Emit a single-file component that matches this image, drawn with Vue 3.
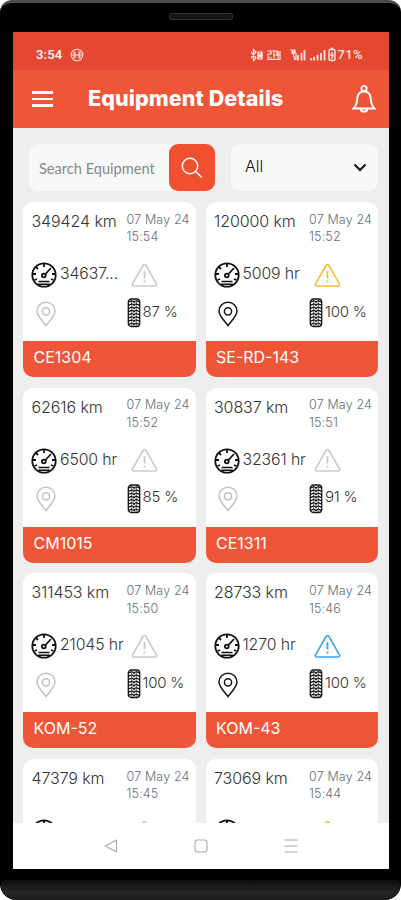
<template>
  <div class="phone">
    <div class="speaker"></div>
    <div class="screen">
      <div class="status-bar">
        <span class="time">3:54</span>
        <svg class="status-badge" width="14" height="14" viewBox="0 0 14 14">
          <circle cx="7" cy="7" r="5.8" />
          <path d="M5 3.5v7M9 3.5v7M2 7h10M3 5h2M9 5h2M3 9h2M9 9h2" />
        </svg>
        <svg class="status-icons" width="77" height="16" viewBox="0 0 77 16">
          <path d="M1 5l5 6-2.5 2.5v-11L6 5l-5 6M8 5l4 7M12 5l-4 7M7 8.5h6M8 5h4v7H8z" />
          <path d="M17 4h4v3h-3v4h4M24 4v8M22 4h5v4h-4M28 4v9M30 4v9M17 12.5h13M23 8h7" />
          <path d="M40 3h5v3h-4M42 3l3 10M46 6v7M44 3v4" />
          <path class="bars" d="M48 8v5.5M51.500 6v7.500M54.500 3v10.500" />
          <path class="bars" d="M61 11v2.500M64 10v3.500M67.500 8v5.500M71 6v7.500M74.500 3v10.500" />
        </svg>
        <svg class="battery" width="8" height="15" viewBox="0 0 8 15">
          <path d="M2.500 1.500h3M1 4q0-1.500 1.500-1.500h3Q7 2.500 7 4v8q0 1.500-1.500 1.500h-3Q1 13.500 1 12zM4.500 5L3 8h2l-1.500 4" />
        </svg>
        <span class="percent">71%</span>
      </div>

      <div class="header">
        <div class="hamburger"><i></i><i></i><i></i></div>
        <h1>Equipment Details</h1>
        <svg class="bell" width="24" height="30" viewBox="0 0 24 30">
          <circle cx="12" cy="4.500" r="2.600" />
          <path d="M1.500 24.500c3-3 3.500-5 3.800-10C5.600 10 8 7.500 12 7.500s6.400 2.500 6.700 7c.3 5 .8 7 3.800 10zM8.500 25c.5 3.500 6.500 3.500 7 0" />
        </svg>
      </div>

      <div class="content">
        <div class="filters">
          <div class="search">
            <input v-model="search" type="text" placeholder="Search Equipment" />
            <button class="btn-search">
              <svg width="24" height="24" viewBox="0 0 24 24">
                <circle cx="10" cy="10" r="7.700" />
                <path d="M15.600 15.600l6.200 6" />
              </svg>
            </button>
          </div>
          <div class="select">
            <span>All</span>
            <svg width="14" height="9" viewBox="0 0 14 9">
              <path d="M1.500 1.500L7 7l5.500-5.500" />
            </svg>
          </div>
        </div>

        <div class="cards">
          <div v-for="item in equipment" :key="item.km" class="card">
            <div class="top">
              <span class="km">{{ item.km }} km</span>
              <span class="date">07 May 24<br />{{ item.time }}</span>
            </div>
            <div class="row">
              <svg class="gauge" width="26" height="26" viewBox="0 0 26 26">
                <circle cx="13" cy="13" r="11.700" />
                <path d="M13 2v3M5 5l2 2M1.500 12H5M21 12h3.500M3.500 18l2.500-1M22.500 18L20 17M14 12.500l6-6.500" />
                <circle cx="12.800" cy="13.500" r="1.900" />
                <path class="base" d="M7.500 19.500h11M7 22.300h12" />
              </svg>
              <span class="hours">{{ item.hours }}</span>
              <svg class="warning" :class="item.alert" width="27" height="25" viewBox="0 0 27 25">
                <path d="M12 2.500q1.500-2 3 0l10.300 18q1.200 2.500-1.500 2.500H3.200q-2.700 0-1.500-2.500z" />
                <path class="mark" d="M13.500 8v7.500M13.500 17.500v2" />
              </svg>
            </div>
            <div v-if="item.wear" class="row bottom">
              <svg class="pin" :class="{ active: item.located }" width="22" height="26" viewBox="0 0 22 26">
                <path d="M11 24.500C9 21.300 2 15.500 2 10a9 8.800 0 0118 0c0 5.500-7 11.300-9 14.500z" />
                <circle cx="11" cy="10.300" r="3.600" />
              </svg>
              <svg class="tire" width="14" height="30" viewBox="0 0 14 30">
                <rect x="1.300" y="1" width="11.400" height="27.500" rx="3" />
                <path v-for="n in 8" :key="n" :d="`M1 ${n * 3.2 + 1}l4-1.600M13 ${n * 3.2 + 1}l-4-1.600M5.500 ${n * 3.2 - 0.6}l1.500 1.600 1.500-1.600`" />
                <path class="groove" d="M4.800 2v26M9.200 2v26" />
              </svg>
              <span class="wear">{{ item.wear }} %</span>
            </div>
            <div v-if="item.name" class="name">{{ item.name }}</div>
          </div>
        </div>
      </div>

      <div class="nav">
        <svg width="14" height="14" viewBox="0 0 14 14"><path d="M12.500 1.200v11.600L1 7z" /></svg>
        <svg width="14" height="14" viewBox="0 0 14 14"><rect x="1" y="1" width="12" height="12" rx="2.500" /></svg>
        <svg width="14" height="14" viewBox="0 0 14 14"><path d="M.5 1h13M.5 7h13M.5 13h13" /></svg>
      </div>
    </div>
    <div class="chin"></div>
  </div>
</template>

<script setup>
import { ref } from 'vue'

const search = ref('')

const equipment = ref([
  { km: 349424, time: '15:54', hours: '34637...', alert: '', located: false, wear: 87, name: 'CE1304' },
  { km: 120000, time: '15:52', hours: '5009 hr', alert: 'yellow', located: true, wear: 100, name: 'SE-RD-143' },
  { km: 62616, time: '15:52', hours: '6500 hr', alert: '', located: false, wear: 85, name: 'CM1015' },
  { km: 30837, time: '15:51', hours: '32361 hr', alert: '', located: false, wear: 91, name: 'CE1311' },
  { km: 311453, time: '15:50', hours: '21045 hr', alert: '', located: false, wear: 100, name: 'KOM-52' },
  { km: 28733, time: '15:46', hours: '1270 hr', alert: 'blue', located: true, wear: 100, name: 'KOM-43' },
  { km: 47379, time: '15:45', alert: '' },
  { km: 73069, time: '15:44', alert: 'yellow' }
])
</script>

<style>
body {
  background: #fff;
}
</style>

<style scoped>
* {
  box-sizing: border-box;
}

svg {
  display: block;
  flex: none;
  fill: none;
  stroke: currentColor;
  stroke-width: 1.4;
}

.phone {
  width: 401px;
  height: 900px;
  background: #000;
  border-top: 3px solid #4b4b4b;
  border-radius: 12px 12px 16px 16px;
  overflow: hidden;
  display: flex;
  flex-direction: column;
  align-items: center;
  font-family: Inter, 'Liberation Sans', sans-serif;
}

.speaker {
  width: 64px;
  height: 7px;
  margin: 10px 0 12px;
  border: 1px solid #333;
  border-radius: 3px;
  background: #151515;
  flex: none;
}

.screen {
  width: 376px;
  height: 837px;
  flex: none;
  background: #fff;
  display: flex;
  flex-direction: column;
}

.status-bar {
  height: 38px;
  flex: none;
  background: #e54832;
  color: #ffe4df;
  display: flex;
  align-items: center;
  padding: 7px 25px 0 23.5px;
  font: 500 13px Roboto, sans-serif;
}

.time {
  width: 27px;
  color: #fff;
  letter-spacing: 0.2px;
}

.status-badge {
  margin-left: 7px;
  stroke-width: 1.1;
}

.status-icons {
  margin-left: auto;
  stroke-width: 1.2;
}

.bars {
  stroke-width: 1.8;
}

.battery {
  margin: 0 2px 0 1px;
}

.percent {
  width: 26px;
  letter-spacing: 0.3px;
}

.header {
  height: 58px;
  flex: none;
  background: #ef5638;
  color: #fff;
  display: flex;
  align-items: center;
  padding: 0 13px 0 19px;
}

.hamburger {
  width: 21px;
  display: flex;
  flex-direction: column;
  gap: 4px;
}

.hamburger i {
  height: 2.500px;
  background: #fff;
}

.header h1 {
  margin: -3px 0 0 35.500px;
  font-size: 21.500px;
  line-height: 30px;
  font-weight: 800;
  letter-spacing: 0.1px;
  white-space: nowrap;
}

.bell {
  margin-left: auto;
  stroke-width: 1.9;
}

.content {
  height: 695px;
  flex: none;
  overflow: hidden;
  background: #eee;
  padding: 16px 10.500px 0;
}

.filters {
  height: 47px;
  display: flex;
  justify-content: space-between;
  padding-left: 6px;
}

.search {
  width: 186px;
  display: flex;
  background: #f8f8f8;
  border-radius: 9px;
}

.search input {
  width: 140px;
  padding: 1px 0 0 10px;
  border: none;
  outline: none;
  background: transparent;
  font: 14.600px Lato, sans-serif;
}

.search input::placeholder {
  color: #85888b;
}

.btn-search {
  width: 46px;
  padding: 0;
  border: none;
  border-radius: 9px;
  background: #ef5030;
  color: #fff;
  display: flex;
  align-items: center;
  justify-content: center;
}

.select {
  width: 147px;
  display: flex;
  align-items: center;
  justify-content: space-between;
  padding: 0 11px 3px 14px;
  background: #f8f8f8;
  border-radius: 9px;
  font-size: 16px;
  font-weight: 300;
  color: #111;
}

.select svg {
  stroke-width: 2;
  margin-top: 3px;
}

.cards {
  display: grid;
  grid-template-columns: 172.500px 172.500px;
  gap: 10.700px 10px;
  margin-top: 11px;
}

.card {
  height: 175px;
  display: flex;
  flex-direction: column;
  background: #fff;
  border-radius: 10px;
  overflow: hidden;
  color: #333;
}

.top {
  height: 60px;
  padding: 8px 0 0 8.500px;
  display: flex;
  white-space: nowrap;
}

.km {
  width: 95px;
  font-size: 16px;
  line-height: 23px;
  font-weight: 300;
  letter-spacing: -0.1px;
}

.date {
  padding-top: 0.500px;
  font-size: 12.500px;
  line-height: 17.700px;
  font-weight: 300;
  letter-spacing: 0.150px;
  color: #667077;
}

.row {
  height: 26px;
  display: flex;
  align-items: center;
  padding-left: 8px;
}

.gauge {
  color: #111;
  stroke-width: 1.8;
}

.base {
  stroke-width: 1.5;
}

.hours {
  width: 73px;
  padding: 0 0 3px 3px;
  font-size: 15.800px;
  font-weight: 300;
  letter-spacing: -0.1px;
  white-space: nowrap;
}

.warning {
  margin-left: 1px;
  color: #c7cacc;
  stroke-width: 1.600;
}

.warning.yellow {
  color: #fbbd35;
}

.warning.blue {
  color: #3ba5e8;
}

.mark {
  stroke-width: 1.8;
}

.bottom {
  height: 30px;
  margin-top: 10px;
}

.pin {
  margin: 1px 0 0 3.500px;
  color: #bfc3c6;
  stroke-width: 1.500;
}

.pin.active {
  color: #151515;
}

.tire {
  margin-left: 70px;
  color: #151515;
  stroke-width: 1.3;
}

.groove {
  stroke-width: 0.7;
}

.wear {
  padding: 0 0 4px 2px;
  font-size: 15px;
  font-weight: 300;
  letter-spacing: -0.200px;
  white-space: nowrap;
}

.name {
  height: 36px;
  margin-top: auto;
  padding-left: 10.500px;
  background: #ef5638;
  color: #fff;
  font-size: 16px;
  line-height: 32px;
  font-weight: 400;
}

.nav {
  height: 46px;
  flex: none;
  display: flex;
  align-items: center;
  justify-content: center;
  gap: 76px;
  color: #aaa;
}

.nav svg {
  stroke-width: 1.1;
}

.chin {
  width: 399px;
  height: 20px;
  margin-top: 11px;
  flex: none;
  background: linear-gradient(#0d0d0d, #262626 60%, #1c1c1c);
  border-radius: 4px 4px 15px 15px;
}
</style>
